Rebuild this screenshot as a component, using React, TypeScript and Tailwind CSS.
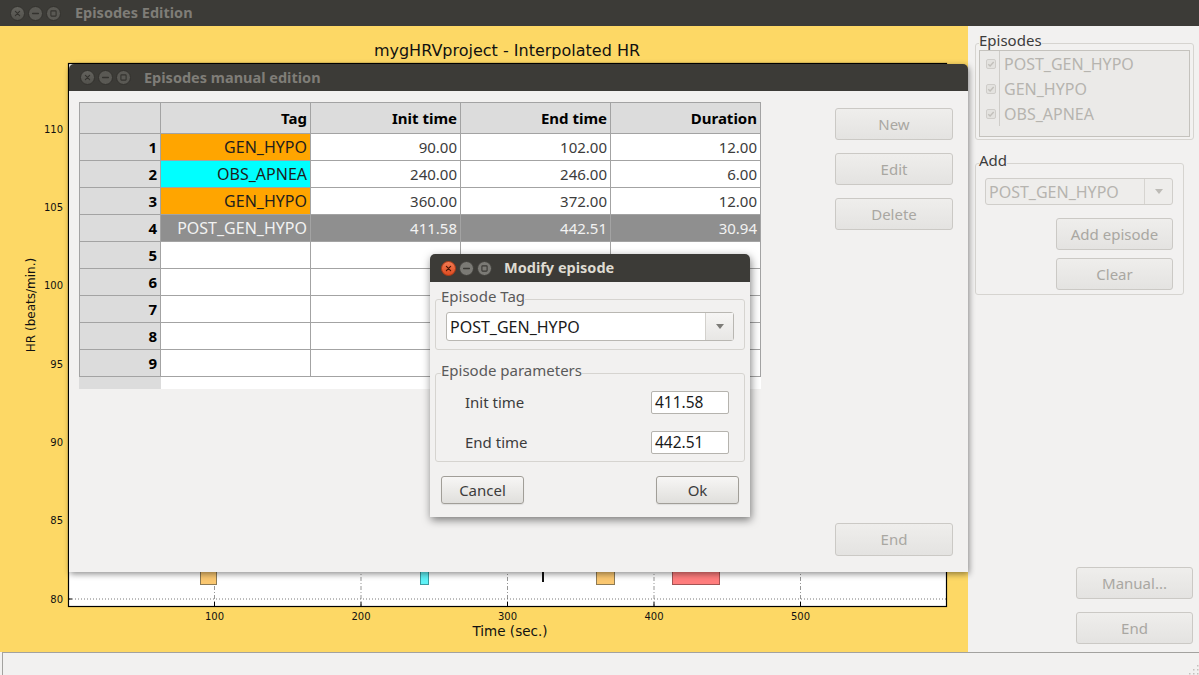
import React from "react";

type CtlProps = { active?: boolean };

function WindowControls({ active = false }: CtlProps) {
  const base = active ? "#7b7a75" : "#5a5954";
  const edge = active ? "#3f3e3a" : "#33322e";
  const glyph = active ? "#3a3935" : "#34332f";
  return (
    <div className="flex items-center gap-[3px]">
      <svg width="15" height="15" viewBox="0 0 15 15">
        <defs>
          <linearGradient id={active ? "closeOn" : "closeOff"} x1="0" y1="0" x2="0" y2="1">
            <stop offset="0" stopColor={active ? "#f47c55" : "#64635e"} />
            <stop offset="1" stopColor={active ? "#dc4a1f" : "#52514c"} />
          </linearGradient>
        </defs>
        <circle cx="7.5" cy="7.5" r="7" fill={`url(#${active ? "closeOn" : "closeOff"})`} stroke={active ? "#a73a18" : edge} />
        <path d="M5.4 5.4l4.2 4.2M9.6 5.4l-4.2 4.2" stroke={active ? "#4b1606" : glyph} strokeWidth="1.2" strokeLinecap="round" />
      </svg>
      <svg width="15" height="15" viewBox="0 0 15 15">
        <circle cx="7.5" cy="7.5" r="7" fill={base} stroke={edge} />
        <path d="M4.6 7.5h5.8" stroke={glyph} strokeWidth="1.3" strokeLinecap="round" />
      </svg>
      <svg width="15" height="15" viewBox="0 0 15 15">
        <circle cx="7.5" cy="7.5" r="7" fill={base} stroke={edge} />
        <rect x="4.9" y="4.9" width="5.2" height="5.2" fill="none" stroke={glyph} strokeWidth="1.1" rx="0.6" />
      </svg>
    </div>
  );
}

function QtButton({ label, disabled = false, className = "" }: { label: string; disabled?: boolean; className?: string }) {
  const look = disabled
    ? "border-[#cbc9c5] from-[#efeeec] to-[#e4e3e1] text-[#a9a7a2]"
    : "border-[#a19e98] from-[#f7f6f5] to-[#e0dfdc] text-[#3c3c3c] shadow-[0_1px_1px_rgba(0,0,0,0.08)]";
  return (
    <button className={`flex items-center justify-center rounded-[3px] border bg-linear-to-b text-[15px] ${look} ${className}`}>
      {label}
    </button>
  );
}

function DropArrow({ color }: { color: string }) {
  return (
    <svg width="8" height="5" viewBox="0 0 8 5">
      <path d="M0 0h8L4 5z" fill={color} />
    </svg>
  );
}

function Plot() {
  const xt = [100, 200, 300, 400, 500];
  const yt = [80, 85, 90, 95, 100, 105, 110];
  const X = (v: number) => 68 + v * 1.465;
  const Y = (v: number) => 573 - (v - 80) * 15.67;
  return (
    <svg width="968" height="626" className="block" fontFamily="'DejaVu Sans', sans-serif">
      <text x="507" y="30" textAnchor="middle" fontSize="16" fill="#111">
        mygHRVproject - Interpolated HR
      </text>
      <rect x="68.5" y="37.5" width="878" height="543" fill="#ffffff" />
      {xt.map((v) => (
        <line key={`gx${v}`} x1={X(v)} x2={X(v)} y1={38} y2={580} stroke="#6a6a6a" strokeWidth="0.7" strokeDasharray="4 2 1 2" />
      ))}
      {yt.map((v) => (
        <line key={`gy${v}`} x1={69} x2={946} y1={Y(v)} y2={Y(v)} stroke="#555" strokeWidth="0.8" strokeDasharray="1 2" />
      ))}
      <rect x="200.5" y="540.5" width="16" height="18" fill="#fac770" stroke="#8d7a55" />
      <rect x="420.5" y="540.5" width="8" height="18" fill="#5ff2f6" stroke="#3a9ca0" />
      <line x1="543" x2="543" y1="540" y2="556" stroke="#111" strokeWidth="2" />
      <rect x="596.5" y="540.5" width="18" height="18" fill="#fac770" stroke="#8d7a55" />
      <rect x="672.5" y="540.5" width="47" height="18" fill="#ff7d7d" stroke="#a45454" />
      {xt.map((v) => (
        <line key={`tx${v}`} x1={X(v)} x2={X(v)} y1={576} y2={580} stroke="#000" />
      ))}
      {yt.map((v) => (
        <line key={`ty${v}`} x1={68} x2={72} y1={Y(v)} y2={Y(v)} stroke="#000" />
      ))}
      <rect x="68.5" y="37.5" width="878" height="543" fill="none" stroke="#000" strokeWidth="1.2" />
      {yt.map((v) => (
        <text key={`ly${v}`} x="63" y={Y(v) + 3.6} textAnchor="end" fontSize="10" fill="#111">
          {v}
        </text>
      ))}
      {xt.map((v) => (
        <text key={`lx${v}`} x={X(v)} y="594" textAnchor="middle" fontSize="10" fill="#111">
          {v}
        </text>
      ))}
      <text x="510" y="610" textAnchor="middle" fontSize="13.5" fill="#111">
        Time (sec.)
      </text>
      <text x="0" y="0" transform="translate(35 279) rotate(-90)" textAnchor="middle" fontSize="12" fill="#111">
        HR (beats/min.)
      </text>
    </svg>
  );
}

type Row = { n: number; tag?: string; tagBg?: string; init?: string; end?: string; dur?: string; sel?: boolean };

const rows: Row[] = [
  { n: 1, tag: "GEN_HYPO", tagBg: "bg-[#ffa500]", init: "90.00", end: "102.00", dur: "12.00" },
  { n: 2, tag: "OBS_APNEA", tagBg: "bg-[#00ffff]", init: "240.00", end: "246.00", dur: "6.00" },
  { n: 3, tag: "GEN_HYPO", tagBg: "bg-[#ffa500]", init: "360.00", end: "372.00", dur: "12.00" },
  { n: 4, tag: "POST_GEN_HYPO", init: "411.58", end: "442.51", dur: "30.94", sel: true },
  { n: 5 },
  { n: 6 },
  { n: 7 },
  { n: 8 },
  { n: 9 },
];

function EpisodeTable() {
  const head = "h-[31px] flex items-center justify-end pr-[3px] bg-[#dcdcdc] border-r border-b border-[#a3a3a3] font-bold text-black";
  const cell = "h-[27px] flex items-center justify-end pr-[3px] border-r border-b border-[#a3a3a3]";
  return (
    <div className="w-[682px] text-[15px]">
      <div className="grid grid-cols-[81px_150px_150px_150px_150px] border-l border-t border-[#a3a3a3]">
        <div className={head} />
        <div className={head}>Tag</div>
        <div className={head}>Init time</div>
        <div className={head}>End time</div>
        <div className={head}>Duration</div>
        {rows.map((r) => (
          <React.Fragment key={r.n}>
            <div className={`${cell} bg-[#dcdcdc] font-bold text-black`}>{r.n}</div>
            <div className={`${cell} text-[16px] ${r.sel ? "bg-[#8f8f8f] text-[#f2f2f2]" : r.tagBg ? `${r.tagBg} text-[#1e1e1e]` : "bg-white"}`}>{r.tag}</div>
            <div className={`${cell} ${r.sel ? "bg-[#8f8f8f] text-[#f2f2f2]" : "bg-white text-[#3c3c3c]"}`}>{r.init}</div>
            <div className={`${cell} ${r.sel ? "bg-[#8f8f8f] text-[#f2f2f2]" : "bg-white text-[#3c3c3c]"}`}>{r.end}</div>
            <div className={`${cell} ${r.sel ? "bg-[#8f8f8f] text-[#f2f2f2]" : "bg-white text-[#3c3c3c]"}`}>{r.dur}</div>
          </React.Fragment>
        ))}
      </div>
      <div className="flex h-[12px]">
        <div className="w-[82px] bg-[#dcdcdc]" />
        <div className="flex-1 bg-white" />
      </div>
    </div>
  );
}

function EpisodesWindow() {
  return (
    <div className="absolute left-[69px] top-[64px] flex h-[508px] w-[899px] flex-col overflow-hidden rounded-t-[5px] shadow-[1px_2px_6px_rgba(0,0,0,0.45)]">
      <div className="flex h-[27px] shrink-0 items-center bg-[#3c3b37] pl-[11px]">
        <WindowControls />
        <span className="ml-[13px] text-[14.5px] font-bold text-[#7f7d77]">Episodes manual edition</span>
      </div>
      <div className="flex flex-1 bg-[#f2f1f0] pl-[10px] pr-[15px]">
        <div className="pt-[11px]">
          <EpisodeTable />
        </div>
        <div className="ml-auto flex w-[118px] flex-col gap-[13px] pt-[17px] pb-[16px]">
          <QtButton label="New" disabled className="h-[32px] w-[118px]" />
          <QtButton label="Edit" disabled className="h-[32px] w-[118px]" />
          <QtButton label="Delete" disabled className="h-[32px] w-[118px]" />
          <QtButton label="End" disabled className="mt-auto h-[33px] w-[118px]" />
        </div>
      </div>
    </div>
  );
}

function ModifyDialog() {
  return (
    <div className="absolute left-[430px] top-[254px] flex w-[320px] flex-col overflow-hidden rounded-t-[5px] shadow-[1px_3px_8px_rgba(0,0,0,0.5)]">
      <div className="flex h-[28px] items-center bg-[#3c3b37] pl-[11px]">
        <WindowControls active />
        <span className="ml-[12px] text-[14.5px] font-bold text-[#dfdbd2]">Modify episode</span>
      </div>
      <div className="flex flex-col bg-[#f2f1f0] px-[5px] pb-[13px] text-[15px]">
        <fieldset className="mt-[6px] rounded-[3px] border border-[#d6d4d0] px-[5px] pb-[8px]">
          <legend className="pb-[6px] leading-[16px] text-[#5a5a5a]">Episode Tag</legend>
          <div className="mt-[2px] px-[5px]">
            <div className="flex h-[29px] rounded-[3px] border border-[#b9b7b2] bg-white">
              <div className="flex flex-1 items-center pl-[3px] text-[16px] text-[#1a1a1a]">POST_GEN_HYPO</div>
              <div className="flex w-[28px] items-center justify-center border-l border-[#d3d1cd] bg-linear-to-b from-[#f6f5f4] to-[#e8e7e5]">
                <DropArrow color="#7d7c78" />
              </div>
            </div>
          </div>
        </fieldset>
        <fieldset className="mt-[12px] rounded-[3px] border border-[#d6d4d0] px-[5px] pb-[7px]">
          <legend className="pb-[6px] leading-[16px] text-[#5a5a5a]">Episode parameters</legend>
          <div className="mt-[7px] flex flex-col gap-[17px] pl-[24px] pr-[10px] text-[#3c3c3c]">
            <div className="flex items-center justify-between">
              <span>Init time</span>
              <div className="flex h-[23px] w-[78px] items-center rounded-[2px] border border-[#b5b3ae] bg-white pl-[3px] text-[15.5px] text-[#1a1a1a]">411.58</div>
            </div>
            <div className="flex items-center justify-between">
              <span>End time</span>
              <div className="flex h-[23px] w-[78px] items-center rounded-[2px] border border-[#b5b3ae] bg-white pl-[3px] text-[15.5px] text-[#1a1a1a]">442.51</div>
            </div>
          </div>
        </fieldset>
        <div className="mt-[14px] flex justify-between px-[6px]">
          <QtButton label="Cancel" className="h-[28px] w-[83px]" />
          <QtButton label="Ok" className="h-[28px] w-[83px]" />
        </div>
      </div>
    </div>
  );
}

function Check() {
  return (
    <svg width="10" height="10" viewBox="0 0 10 10">
      <rect x="0.5" y="0.5" width="9" height="9" rx="1.5" fill="#e3e2df" stroke="#cfcdc9" />
      <path d="M2.3 5.2l1.8 1.8 3.6-4" fill="none" stroke="#c2c0bb" strokeWidth="1.4" />
    </svg>
  );
}

function RightPanel() {
  const items = ["POST_GEN_HYPO", "GEN_HYPO", "OBS_APNEA"];
  return (
    <div className="flex w-[231px] flex-col bg-[#f2f1f0] pl-[7px] pr-[5px] pb-[8px] text-[15px]">
      <fieldset className="mt-[6px] rounded-[3px] border border-[#d6d4d0] px-[3px] pb-[2px]">
        <legend className="pb-[6px] leading-[16px] text-[#3c3c3c]">Episodes</legend>
        <div className="-mt-[4px] h-[87px] border border-[#c4c2bd] bg-[#ebeae8]">
          {items.map((t) => (
            <div key={t} className="flex h-[25px]">
              <div className="flex w-[20px] items-center border-r border-[#cfcdc9] pl-[6px]">
                <Check />
              </div>
              <div className="flex items-center pl-[4px] text-[16px] text-[#b6b4af]">{t}</div>
            </div>
          ))}
        </div>
      </fieldset>
      <fieldset className="mt-[12px] mr-[10px] rounded-[3px] border border-[#d6d4d0] px-[3px] pb-[4px]">
        <legend className="pb-[6px] leading-[16px] text-[#3c3c3c]">Add</legend>
        <div className="mt-[4px] flex flex-col items-end pl-[6px] pr-[7px]">
          <div className="flex h-[27px] w-full rounded-[3px] border border-[#d0ceca] bg-[#eeedeb]">
            <div className="flex flex-1 items-center pl-[3px] text-[16px] text-[#b6b4af]">POST_GEN_HYPO</div>
            <div className="flex w-[28px] items-center justify-center border-l border-[#d6d4d0]">
              <DropArrow color="#bdbbb6" />
            </div>
          </div>
          <QtButton label="Add episode" disabled className="mt-[13px] h-[32px] w-[117px]" />
          <QtButton label="Clear" disabled className="mt-[8px] h-[32px] w-[117px]" />
        </div>
      </fieldset>
      <div className="mt-auto flex flex-col items-end gap-[13px] pr-[1px]">
        <QtButton label="Manual..." disabled className="h-[32px] w-[117px]" />
        <QtButton label="End" disabled className="h-[32px] w-[117px]" />
      </div>
    </div>
  );
}

export default function App() {
  return (
    <div className="relative h-[675px] w-[1199px] overflow-hidden bg-[#f2f1f0] font-['Noto_Sans',sans-serif]">
      <div className="flex h-[26px] items-center bg-[#3c3b37] pl-[10px]">
        <WindowControls />
        <span className="ml-[14px] text-[14.5px] font-bold text-[#7f7d77]">Episodes Edition</span>
      </div>
      <div className="flex h-[626px]">
        <div className="w-[968px] bg-[#fdd865]">
          <Plot />
        </div>
        <RightPanel />
      </div>
      <div className="h-[23px] pl-[2px]">
        <div className="flex h-full items-end justify-end border-l border-t border-[#a3a29f]">
          <svg width="12" height="12" viewBox="0 0 12 12">
            {[
              [10, 2], [10, 6], [6, 6], [10, 10], [6, 10], [2, 10],
            ].map(([x, y]) => (
              <rect key={`${x}-${y}`} x={x} y={y} width="1.5" height="1.5" fill="#c3c1bd" />
            ))}
          </svg>
        </div>
      </div>
      <EpisodesWindow />
      <ModifyDialog />
    </div>
  );
}
